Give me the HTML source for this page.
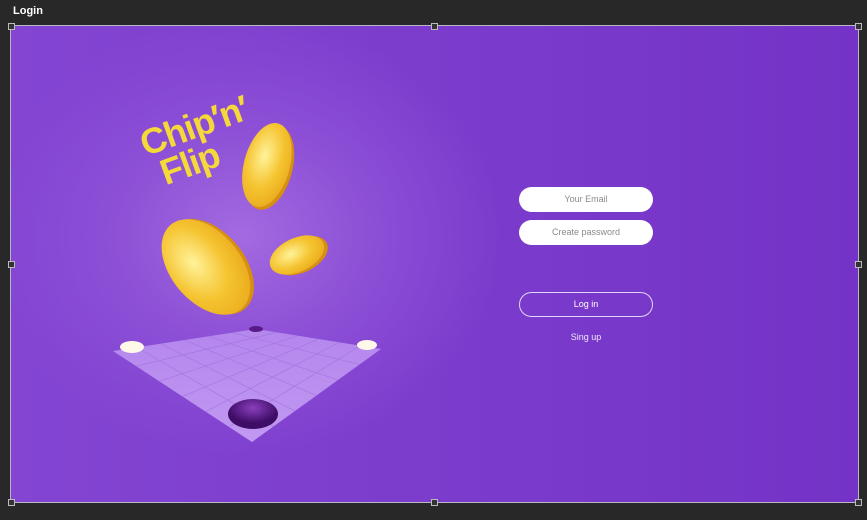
<!DOCTYPE html><html><head><style>
body{margin:0;width:867px;height:520px;background:#282828;overflow:hidden;font-family:"Liberation Sans",sans-serif;position:relative}
.t{position:absolute;left:13px;top:5px;color:#fff;font-weight:bold;font-size:11px}
.c{position:absolute;left:11px;top:26px;width:847px;height:476px;background:radial-gradient(ellipse 260px 220px at 230px 210px,#a36ae0 0%,#8c4fd6 50%,rgba(125,60,205,0) 100%),linear-gradient(90deg,#8345d2,#7a3acb 60%,#7433c6);outline:1px solid #b8b8c8}
.h{position:absolute;width:5px;height:5px;border:1px solid #bbb;background:#333}
.in{position:absolute;left:508px;width:134px;height:25px;border-radius:13px;background:#fff;color:#8a8a8a;font-size:9px;text-align:center;line-height:25px}
.coin{position:absolute;border-radius:50%;background:radial-gradient(ellipse at 40% 40%,#fff39a,#f5c431 45%,#e39b0e 100%);box-shadow:3px 2px 0 #d88f0a}
</style></head><body>
<div class="t">Login</div>
<div class="c">
<svg width="847" height="476" style="position:absolute;left:0;top:0">
<defs><linearGradient id="b" x1="0" y1="0" x2="0" y2="1"><stop offset="0" stop-color="#b689ee"/><stop offset="1" stop-color="#c49df3"/></linearGradient>
<radialGradient id="d" cx="50%" cy="30%"><stop offset="0" stop-color="#8a3fbd"/><stop offset="1" stop-color="#3e0d66"/></radialGradient></defs>
<polygon points="245,303 370,323 241,416 102,325" fill="url(#b)" opacity="0.95"/>
<g stroke="#a275e2" stroke-width="0.8" opacity="0.8">
<line x1="125.2" y1="340.2" x2="265.8" y2="306.3"/><line x1="148.3" y1="355.3" x2="286.7" y2="309.7"/><line x1="171.5" y1="370.5" x2="307.5" y2="313"/><line x1="194.7" y1="385.7" x2="328.3" y2="316.3"/><line x1="217.8" y1="400.8" x2="349.2" y2="319.7"/>
<line x1="125.8" y1="321.3" x2="262.5" y2="400.5"/><line x1="149.7" y1="317.7" x2="284" y2="385"/><line x1="173.5" y1="314" x2="305.5" y2="369.5"/><line x1="197.3" y1="310.3" x2="327" y2="354"/><line x1="221.2" y1="306.7" x2="348.5" y2="338.5"/>
</g>
<ellipse cx="121" cy="321" rx="12" ry="6" fill="#fff8e8"/>
<ellipse cx="356" cy="319" rx="10" ry="5" fill="#fff8e8"/>
<ellipse cx="245" cy="303" rx="7" ry="3" fill="#5a1a8a"/>
<ellipse cx="242" cy="388" rx="25" ry="15" fill="url(#d)"/>
</svg>
<div style="position:absolute;left:133px;top:82px;color:#f5d83a;font-weight:bold;font-size:36px;line-height:34px;transform:rotate(-20deg);letter-spacing:-1px">Chip′n′<br>&nbsp;Flip</div>
<div class="coin" style="left:233px;top:96px;width:46px;height:86px;transform:rotate(15deg)"></div>
<div class="coin" style="left:160px;top:186px;width:70px;height:110px;transform:rotate(-40deg)"></div>
<div class="coin" style="left:257px;top:212px;width:58px;height:34px;transform:rotate(-25deg)"></div>
<div class="in" style="top:161px">Your Email</div>
<div class="in" style="top:194px">Create password</div>
<div style="position:absolute;left:508px;top:266px;width:132px;height:23px;border:1.5px solid #e4d4f8;border-radius:13px;color:#fff;font-size:9px;text-align:center;line-height:23px">Log in</div>
<div style="position:absolute;left:508px;top:306px;width:134px;text-align:center;color:#f0e6ff;font-size:9px">Sing up</div>
</div>
<div class="h" style="left:8px;top:23px"></div><div class="h" style="left:431px;top:23px"></div><div class="h" style="left:855px;top:23px"></div>
<div class="h" style="left:8px;top:261px"></div><div class="h" style="left:855px;top:261px"></div>
<div class="h" style="left:8px;top:499px"></div><div class="h" style="left:431px;top:499px"></div><div class="h" style="left:855px;top:499px"></div>
</body></html>
